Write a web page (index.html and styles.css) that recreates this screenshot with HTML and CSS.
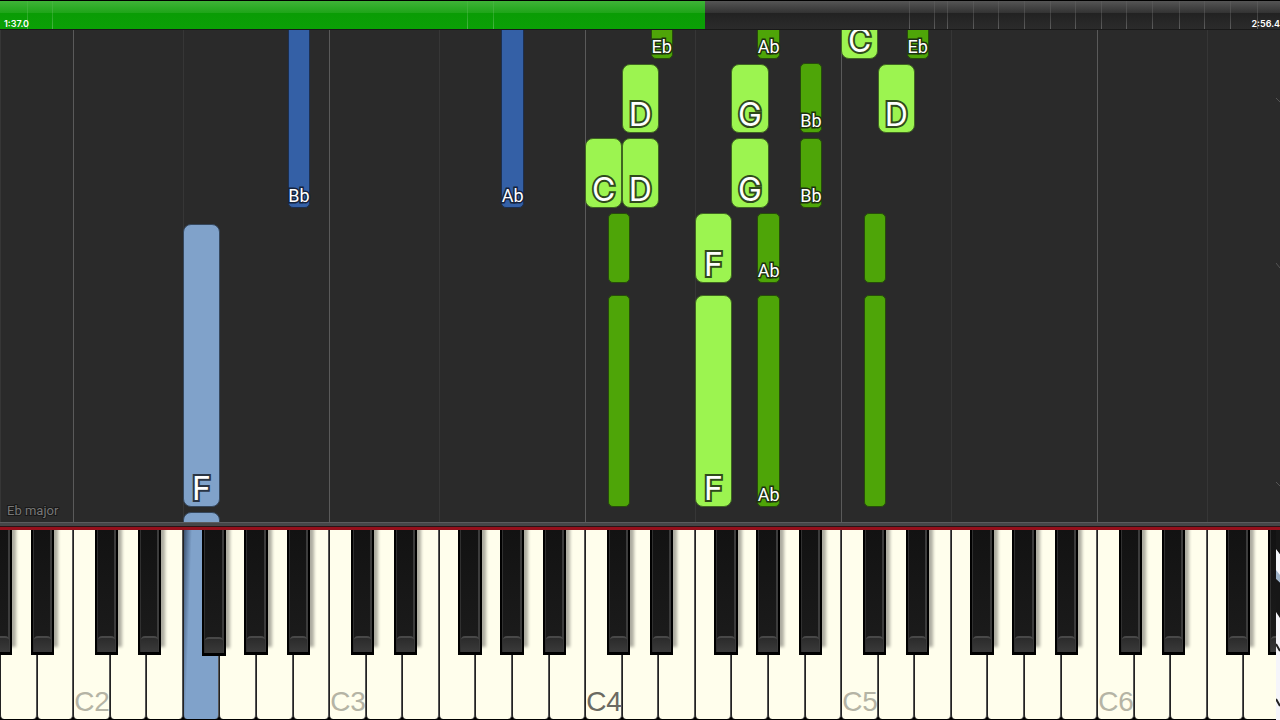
FILE: index.html
```
<!DOCTYPE html>
<html lang="en">
<head>
<meta charset="utf-8">
<title>Piano roll</title>
<link rel="stylesheet" href="styles.css">
</head>
<body>
<main class="app">
  <header class="timeline">
    <div class="played"></div>
    <div class="marks"></div>
    <div class="times"><span>1:37.0</span><span>2:56.4</span></div>
  </header>
  <section class="roll" aria-label="Falling notes">
    <div class="guides"></div>
    <div class="notes"></div>
    <p class="signature">Eb major</p>
  </section>
  <div class="rail"></div>
  <section class="keyboard" aria-label="Keyboard">
    <div class="whites"></div>
    <div class="blacks"></div>
  </section>
  <svg class="edge" viewBox="0 0 4 720" preserveAspectRatio="none" aria-hidden="true">
    <path d="M0 98L4 102M0 263L4 268M0 482L4 486" stroke="#555" fill="none"/>
    <path d="M0 549L4 554V582L0 579Z" fill="#f4f6fb"/>
    <path d="M0 570L4 575V583L0 579Z" fill="#9fb3c9"/>
    <path d="M0 530H4V554L0 548ZM0 579L4 583V618L0 612Z" fill="#171717"/>
    <path d="M0 612L4 618V720H0Z" fill="#f5f5fa"/>
    <path d="M0 644L4 651M0 699L4 706" stroke="#222" stroke-width="2" fill="none"/>
  </svg>
</main>
<script src="app.js"></script>
</body>
</html>
```
FILE: styles.css
```
* { box-sizing: border-box; }
body {
  margin: 0;
  background: #000;
  font-family: Roboto, "Liberation Sans", sans-serif;
}
.app {
  position: relative;
  display: flex;
  flex-direction: column;
  min-height: 100vh;
  overflow: hidden;
}
.timeline {
  position: relative;
  height: 30px;
  border-top: 1px solid #000;
  border-bottom: 1px solid #191919;
  background: linear-gradient(#555, #333 42%, #222 44%, #2b2b2b);
}
.played {
  width: 55.1%;
  height: 100%;
  background: linear-gradient(#3fb338, #1fa519 42%, #0a9c05 44%, #0ba006);
}
.marks, .guides, .notes, .blacks {
  position: absolute;
  inset: 0;
}
.mark {
  position: absolute;
  top: 0;
  bottom: 0;
  width: 1px;
  background: linear-gradient(rgba(255,255,255,.04), rgba(255,255,255,.24));
}
.times {
  position: absolute;
  inset: auto 0 0 4px;
  display: flex;
  justify-content: space-between;
  color: #fff;
  font: 600 9px/10px Inter, sans-serif;
}
.roll {
  position: relative;
  flex: 1;
  min-height: 492px;
  overflow: hidden;
  background: #2a2a2a;
}
.guide {
  position: absolute;
  top: 0;
  bottom: 0;
  width: 1px;
  background: #363636;
}
.guide.octave { background: #5a5a5a; }
.note {
  position: absolute;
  display: flex;
  align-items: flex-end;
  justify-content: center;
  border: 1px solid;
  border-radius: 8px;
  color: #fff;
  white-space: nowrap;
  paint-order: stroke fill;
}
.note.wide {
  width: 2.9%;
  font-family: Inter, "Liberation Sans", sans-serif;
  font-size: 32px;
  line-height: 35px;
  -webkit-text-stroke: 4px #2f4a1c;
}
.note.slim {
  width: 1.75%;
  border-radius: 5px;
  font-size: 18px;
  line-height: 22px;
  -webkit-text-stroke: 3px #1c3010;
}
.right.wide { background: #9cf450; border-color: #3f6621; }
.right.slim { background: #4ea508; border-color: #264c0b; }
.left.wide { background: #80a2ca; border-color: #35475d; -webkit-text-stroke-color: #2a3544; }
.left.slim { background: #3460a6; border-color: #1c2f50; -webkit-text-stroke-color: #14233d; }
.signature {
  position: absolute;
  left: 7px;
  bottom: 3px;
  margin: 0;
  font-size: 13px;
  line-height: 16px;
  color: #777;
  -webkit-text-stroke: 2px #181818;
  paint-order: stroke fill;
}
.rail {
  height: 8px;
  background: linear-gradient(#5c5c5e 0 1px, #464648 1px 4px, #2a1416 4px 5px, #96101c 5px 8px);
}
.keyboard {
  position: relative;
  height: 190px;
  background: #000;
}
.whites {
  display: grid;
  grid-template-columns: repeat(35, 1fr);
  height: 189px;
}
.white {
  appearance: none;
  display: flex;
  align-items: flex-end;
  min-width: 0;
  padding: 0;
  border: 0;
  border-left: 1px solid #222;
  border-right: 1px solid #555;
  border-radius: 0 0 4px 4px;
  background: #fffeec;
  color: #b5b4a5;
  font: 28px/34px "Liberation Sans", sans-serif;
}
.white.middle { color: #6b6a62; }
.white.down {
  background: linear-gradient(92deg, #3d5270 0, #5f7ca1 4px, #80a2ca 8px);
}
.blacks { overflow: hidden; }
.black {
  appearance: none;
  position: absolute;
  top: 0;
  width: 1.85%;
  height: 125px;
  padding: 0;
  border: solid #000;
  border-width: 0 2px 3px;
  background: linear-gradient(90deg, #303030 0 1px, transparent 1px calc(100% - 2px), #3c3c3c calc(100% - 2px)), linear-gradient(#121212, #1c1c1c);
  box-shadow: 4px -8px 3px rgba(0,0,0,.32);
}
.black::after {
  content: "";
  position: absolute;
  inset: auto 1px 0;
  height: 14px;
  border-top: 2px solid #484848;
  border-radius: 4px 4px 0 0;
  background: linear-gradient(#2b2b2b, #3a3a3a);
}
.black.down { height: 126px; }
.edge {
  position: absolute;
  top: 0;
  right: 0;
  width: 4px;
  height: 100%;
}
```
FILE: app.js
```
const KEYS = 35;
const place = (parent, tag, cls, left, text = "") => {
  const el = document.createElement(tag);
  el.className = cls;
  el.textContent = text;
  if (left !== null) el.style.left = left + "%";
  document.querySelector(parent).append(el);
  return el;
};

// Section marks on the timeline, as percentages of its length.
[2.1, 4.05, 36.5, 38.5, 71, 73, 74, 76, 78, 80, 82, 84, 86, 88, 90, 92.1, 94.1, 96.1, 98.2]
  .forEach(x => place(".marks", "i", "mark", x));

// White key index: 2 is C2, each octave spans seven keys.
for (let i = 0; i < KEYS; i++) {
  const octave = Math.floor((i - 2) / 7) + 2;
  const degree = (i + 5) % 7;
  const isC = degree === 0;
  if (isC || degree === 3) place(".guides", "i", "guide" + (isC ? " octave" : ""), i * 100 / KEYS);
  const key = place(".whites", "button", "white" + (i === 16 ? " middle" : "") + (i === 5 ? " down" : ""), null, isC ? "C" + octave : "");
  key.type = "button";
  key.setAttribute("aria-label", "CDEFGAB"[degree] + octave);
}
place(".guides", "i", "guide", 0);

// Centres of the black keys within an octave, in percent of the keyboard.
const BLACK = { Db: 2.6, Eb: 5.95, Gb: 10.98, Ab: 14.3, Bb: 17.6 };
const octaveStart = octave => (2 + (octave - 2) * 7) * 100 / KEYS;
for (let octave = 1; octave <= 6; octave++) {
  for (const [name, centre] of Object.entries(BLACK)) {
    const x = octaveStart(octave) + centre;
    if (x < -1 || x > 101) continue;
    const down = octave === 2 && name === "Gb";
    const key = place(".blacks", "button", "black" + (down ? " down" : ""), x - 0.92);
    key.type = "button";
    key.setAttribute("aria-label", name + octave);
  }
}

// hand, pitch, octave, top, height, label
[
  ["left", "F", 2, 194, 283, "F"],
  ["left", "F", 2, 482, 60, ""],
  ["left", "Bb", 2, -20, 198, "Bb"],
  ["left", "Ab", 3, -20, 198, "Ab"],
  ["right", "C", 4, 108, 70, "C"],
  ["right", "D", 4, 108, 70, "D"],
  ["right", "D", 4, 34, 69, "D"],
  ["right", "Eb", 4, -20, 49, "Eb"],
  ["right", "Db", 4, 183, 70, ""],
  ["right", "Db", 4, 265, 212, ""],
  ["right", "F", 4, 183, 70, "F"],
  ["right", "F", 4, 265, 212, "F"],
  ["right", "G", 4, 34, 69, "G"],
  ["right", "G", 4, 108, 70, "G"],
  ["right", "Ab", 4, -20, 49, "Ab"],
  ["right", "Ab", 4, 183, 70, "Ab"],
  ["right", "Ab", 4, 265, 212, "Ab"],
  ["right", "Bb", 4, 33, 70, "Bb"],
  ["right", "Bb", 4, 108, 70, "Bb"],
  ["right", "C", 5, -20, 49, "C"],
  ["right", "Eb", 5, -20, 49, "Eb"],
  ["right", "Db", 5, 183, 70, ""],
  ["right", "Db", 5, 265, 212, ""],
  ["right", "D", 5, 34, 69, "D"],
].forEach(([hand, pitch, octave, top, height, label]) => {
  const slim = pitch.length > 1;
  const x = slim
    ? octaveStart(octave) + BLACK[pitch] - 0.84
    : octaveStart(octave) + "CDEFGAB".indexOf(pitch) * 100 / KEYS;
  const note = place(".notes", "div", `note ${hand} ${slim ? "slim" : "wide"}`, x, label);
  note.style.top = top + "px";
  note.style.height = height + "px";
});
```
